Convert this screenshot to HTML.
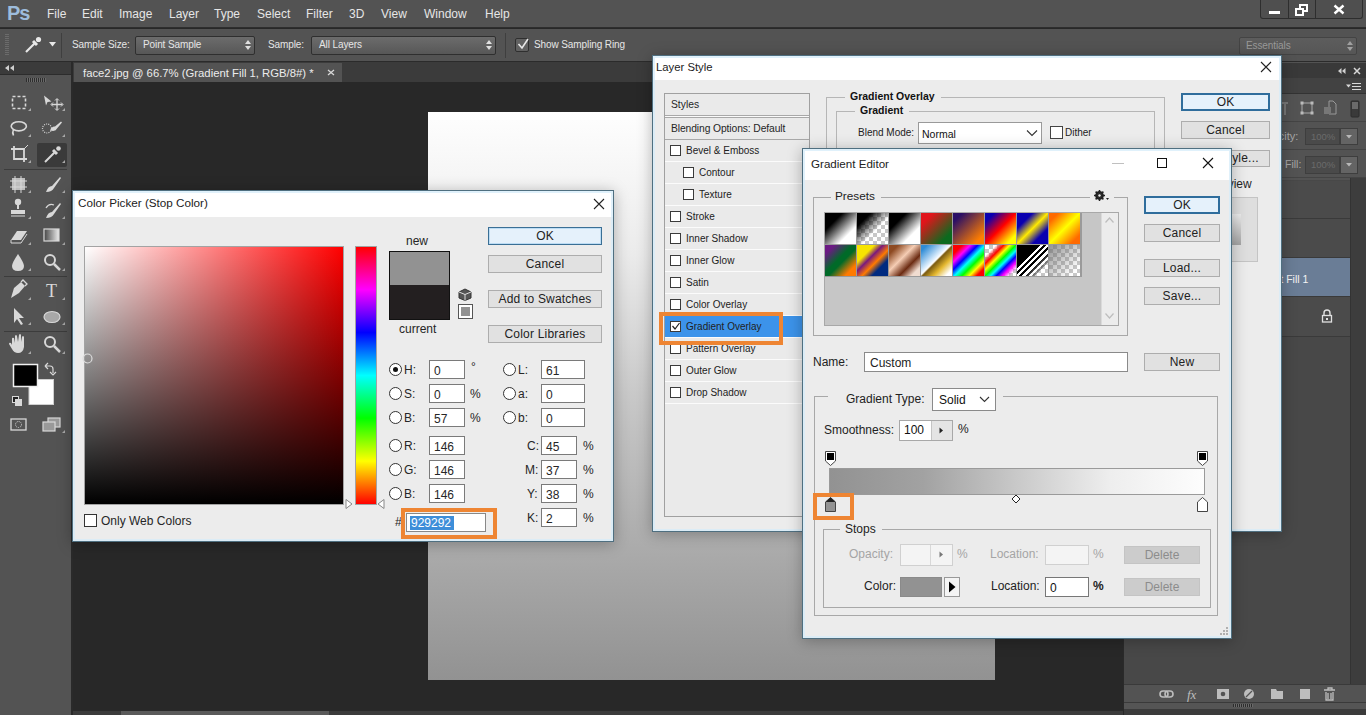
<!DOCTYPE html>
<html><head><meta charset="utf-8">
<style>
*{margin:0;padding:0;box-sizing:border-box}
html,body{width:1366px;height:715px;overflow:hidden;background:#282828;font-family:"Liberation Sans",sans-serif;}
.a{position:absolute}
.t{position:absolute;white-space:nowrap;line-height:1}
#menubar{left:0;top:0;width:1366px;height:28px;background:#535353;border-bottom:1px solid #2e2e2e}
#menubar .t{color:#e6e6e6;font-size:12px;top:8px}
#opts{left:0;top:29px;width:1366px;height:33px;background:#535353;border-bottom:1px solid #2b2b2b}
.ow{color:#e6e6e6;font-size:10px;letter-spacing:-0.1px}
.dd{position:absolute;background:linear-gradient(#6c6c6c,#575757);border:1px solid #2f2f2f;border-radius:2px}
#tools{left:0;top:62px;width:71px;height:653px;background:#535353}
#canvasbg{left:72px;top:62px;width:1051px;height:647px;background:#282828}
.dlg::after{content:"";position:absolute;left:0;top:0;right:0;bottom:0;border:2px solid rgba(214,236,250,.75)}
.dlg{position:absolute;background:#ececec;border:1px solid #4f6f80;box-shadow:0 2px 14px rgba(0,0,0,.28)}
.dlg .title{position:absolute;left:0;top:0;right:0;background:#fff}
.dt{position:absolute;white-space:nowrap;line-height:1;color:#262626;font-size:12px}
.btn{position:absolute;background:#e1e1e1;border:1px solid #adadad;color:#222;font-size:12px;text-align:center;letter-spacing:0.2px}
.btn.def{background:#e5f1fb;border:1px solid #3a6f95;box-shadow:inset 0 0 0 1px #bcdcf4}
.inp{position:absolute;background:#fff;border:1px solid #7a7a7a}
.cb{position:absolute;width:13px;height:13px;background:#fff;border:1px solid #333}
.rb{position:absolute;width:13px;height:13px;background:#fff;border:1px solid #333;border-radius:50%}
.grp{position:absolute;border:1px solid #b6b6b6}
</style></head><body>
<div id="menubar" class="a">
  <div class="t" style="left:7px;top:3px;font-size:20px;font-weight:bold;color:#9dbcdc;letter-spacing:-1px">Ps</div>
  <div class="t" style="left:47px">File</div>
  <div class="t" style="left:82px">Edit</div>
  <div class="t" style="left:119px">Image</div>
  <div class="t" style="left:169px">Layer</div>
  <div class="t" style="left:214px">Type</div>
  <div class="t" style="left:257px">Select</div>
  <div class="t" style="left:306px">Filter</div>
  <div class="t" style="left:349px">3D</div>
  <div class="t" style="left:381px">View</div>
  <div class="t" style="left:424px">Window</div>
  <div class="t" style="left:485px">Help</div>
  <div class="a" style="left:1260px;top:0;width:103px;height:19px;background:#4f4f4f;border:1px solid #2e2e2e;border-top:none;border-radius:0 0 3px 3px"></div>
  <div class="a" style="left:1288px;top:0;width:1px;height:18px;background:#2e2e2e"></div>
  <div class="a" style="left:1315px;top:0;width:1px;height:18px;background:#2e2e2e"></div>
  <div class="a" style="left:1269px;top:11px;width:11px;height:3px;background:#fff"></div>
  <svg class="a" style="left:1295px;top:4px" width="14" height="12"><rect x="5" y="1" width="7" height="6" fill="none" stroke="#fff" stroke-width="2"/><rect x="1" y="5" width="7" height="6" fill="#4f4f4f" stroke="#fff" stroke-width="2"/></svg>
  <svg class="a" style="left:1333px;top:4px" width="12" height="11"><path d="M1.5 1.5L10.5 9.5M10.5 1.5L1.5 9.5" stroke="#fff" stroke-width="2.4"/></svg>
</div>
<div id="opts" class="a">
  <div class="a" style="left:5px;top:5px;width:4px;height:22px;background:repeating-linear-gradient(#6b6b6b 0 1px,transparent 1px 2px)"></div>
  <svg class="a" style="left:23px;top:7px" width="20" height="18"><path d="M3 16 L12 7" stroke="#e8e8e8" stroke-width="2.2"/><path d="M10 5 L14 9" stroke="#e8e8e8" stroke-width="3"/><circle cx="15.5" cy="3.5" r="2.6" fill="#e8e8e8"/></svg>
  <svg class="a" style="left:49px;top:13px" width="8" height="5"><path d="M0 0H7L3.5 4.5Z" fill="#e8e8e8"/></svg>
  <div class="a" style="left:61px;top:4px;width:1px;height:25px;background:#3f3f3f"></div>
  <div class="t ow" style="left:72px;top:11px">Sample Size:</div>
  <div class="dd" style="left:135px;top:7px;width:120px;height:19px"></div>
  <div class="t ow" style="left:143px;top:11px">Point Sample</div>
  <svg class="a" style="left:245px;top:11px" width="7" height="11"><path d="M0 4H6L3 0Z M0 6H6L3 10Z" fill="#e0e0e0"/></svg>
  <div class="t ow" style="left:268px;top:11px">Sample:</div>
  <div class="dd" style="left:311px;top:7px;width:185px;height:19px"></div>
  <div class="t ow" style="left:319px;top:11px">All Layers</div>
  <svg class="a" style="left:486px;top:11px" width="7" height="11"><path d="M0 4H6L3 0Z M0 6H6L3 10Z" fill="#e0e0e0"/></svg>
  <div class="a" style="left:505px;top:4px;width:1px;height:25px;background:#3f3f3f"></div>
  <div class="a" style="left:515px;top:9px;width:14px;height:14px;background:#616161;border:1px solid #2f2f2f;border-radius:2px"></div>
  <svg class="a" style="left:516px;top:8px" width="14" height="13"><path d="M2.5 7L6 11L12 2" stroke="#e8e8e8" stroke-width="1.6" fill="none"/></svg>
  <div class="t ow" style="left:534px;top:11px">Show Sampling Ring</div>
  <div class="dd" style="left:1239px;top:8px;width:118px;height:18px;background:linear-gradient(#5d5d5d,#565656);border-color:#444"></div>
  <div class="t ow" style="left:1246px;top:12px;color:#9a9a9a">Essentials</div>
  <svg class="a" style="left:1347px;top:12px" width="7" height="11"><path d="M0 4H6L3 0Z M0 6H6L3 10Z" fill="#a0a0a0"/></svg>
</div>
<div id="tools" class="a"></div>
<div id="canvasbg" class="a"></div>
<!-- tab strip -->
<div class="a" style="left:72px;top:62px;width:1051px;height:20px;background:#3b3b3b"></div>
<div class="a" style="left:74px;top:63px;width:268px;height:19px;background:#535353"></div>
<div class="t" style="left:83px;top:68px;font-size:11.3px;color:#ececec">face2.jpg @ 66.7% (Gradient Fill 1, RGB/8#) *</div>
<svg class="a" style="left:327px;top:69px" width="8" height="7"><path d="M1 1L7 6M7 1L1 6" stroke="#d8d8d8" stroke-width="1.3"/></svg>
<!-- toolbar -->
<div class="a" style="left:0;top:62px;width:71px;height:13px;background:#3b3b3b;border-bottom:1px solid #2c2c2c"></div>
<svg class="a" style="left:5px;top:65px" width="10" height="7"><path d="M4 0V6L0 3Z M9 0V6L5 3Z" fill="#cfcfcf"/></svg>
<div class="a" style="left:71px;top:62px;width:2px;height:653px;background:#2a2a2a"></div>
<div class="a" style="left:26px;top:78px;width:20px;height:4px;background:repeating-linear-gradient(90deg,#2d2d2d 0 1px,#6a6a6a 1px 2px)"></div>
<div class="a" style="left:4px;top:169px;width:63px;height:1px;background:#3c3c3c"></div>
<div class="a" style="left:4px;top:276px;width:63px;height:1px;background:#3c3c3c"></div>
<div class="a" style="left:4px;top:331px;width:63px;height:1px;background:#3c3c3c"></div>
<div class="a" style="left:37px;top:143px;width:30px;height:24px;background:#3a3a3a;border-radius:2px"></div>

<svg class="a" style="left:0;top:85px" width="71" height="360" fill="#d8d8d8" stroke="#d8d8d8">
 <!-- marquee r0 y~17 -->
 <rect x="12.5" y="11.5" width="13" height="12" fill="none" stroke-width="1.6" stroke-dasharray="3 2"/>
 <path d="M44 10.5 L51.5 16.5 L47.5 17 L46 20.5 Z" stroke="none"/><path d="M57 14v11M51.5 19.5h11" stroke-width="1.3" fill="none"/><path d="M55 15.5L57 13.5L59 15.5M55 23.5L57 25.5L59 23.5M53 17.5L51 19.5L53 21.5M61 17.5L63 19.5L61 21.5" fill="none" stroke-width="1"/>
 <!-- lasso r1 y~43 -->
 <ellipse cx="18.8" cy="41.3" rx="7.6" ry="4.6" fill="none" stroke-width="1.6"/><path d="M13.5 44.5 q-1.5 3 0 6" fill="none" stroke-width="1.6"/>
 <path d="M50 45.5 Q52 41 55 41.5 L61 36.5 L62 37.5 L57 43.5 Q56 47 50 45.5Z" stroke="none"/><circle cx="47" cy="43.5" r="4.5" fill="none" stroke-width="1.2" stroke-dasharray="1 1.2"/>
 <!-- crop r2 y~69 -->
 <path d="M14 61v13h13M11 64h13v13" fill="none" stroke-width="1.8"/><path d="M24 64 L28 60" stroke-width="1"/>
 <path d="M45 77 L55 67" stroke-width="2" /><path d="M53 65 L57 69" stroke-width="3"/><circle cx="58.5" cy="63.5" r="2.3" stroke="none"/>
 <!-- heal r3 y~99 -->
 <rect x="12" y="93" width="13" height="12" stroke="none" fill="#bdbdbd"/><path d="M10 96h17M10 102h17M15 91v17M21 91v17" stroke-width="1" fill="none"/>
 <path d="M46 107 Q48 101 52 101 L60 92 L61 93 L54 103 Q52 107 46 107Z" stroke="none"/>
 <!-- stamp r4 y~125 -->
 <circle cx="18" cy="117" r="3.2" stroke="none"/><path d="M17 119h2v5h-2z M11 125h14v4H11z" stroke="none"/><path d="M11 131h14" stroke-width="1"/>
 <path d="M46 133 Q48 127 52 127 L60 118 L61 119 L54 129 Q52 133 46 133Z" stroke="none"/><path d="M46 123 q3 -5 8 -3" fill="none" stroke-width="1.3"/>
 <!-- eraser r5 y~151 -->
 <path d="M11 155 L17 146 L27 146 L21 155 Z" stroke="none"/><path d="M11 155 v3 h10 l6 -9" fill="none" stroke-width="1"/>
 <rect x="44" y="144" width="15" height="12" fill="url(#gg)" stroke-width="1.2"/>
 <!-- blur r6 y~177 -->
 <path d="M18 169 Q12 178 12 181 Q12 186 18 186 Q24 186 24 181 Q24 178 18 169Z" stroke="none"/>
 <circle cx="50" cy="175" r="5" fill="none" stroke-width="2"/><path d="M54 179 L60 185" stroke-width="2.5"/>
 <!-- pen r7 y~205 -->
 <path d="M11 213 L14 203 L21 197 L25 201 L19 208 Z" stroke="none"/><path d="M21 197 L23 195 L27 199 L25 201" fill="none" stroke-width="1.3"/>
 <text x="46" y="212" font-family="Liberation Serif" font-size="18" stroke="none">T</text>
 <!-- path select r8 y~231 -->
 <path d="M14 223 L14 238 L17 234 L21 240 L23 239 L19 233 L24 233 Z" stroke="none"/>
 <ellipse cx="52" cy="232" rx="8" ry="5.5" fill="#a8a8a8" stroke-width="1.2"/>
 <!-- hand r9 y~260 -->
 <path d="M12 260 L12 254 Q12 252 14 253 L15 258 L15 251 Q16 249 17 251 L18 257 L19 250 Q20 248 21 250 L21 257 L22 252 Q23 250 24 252 L24 262 Q23 268 18 268 Q14 268 12 264 L9 259 Q9 257 11 258Z" stroke="none"/>
 <circle cx="50" cy="257" r="5" fill="none" stroke-width="2"/><path d="M54 261 L60 267" stroke-width="2.5"/>
 <!-- fg/bg -->
 <rect x="29" y="294.5" width="24.5" height="25" fill="#fff" stroke="#d0d0d0" stroke-width="1"/>
 <rect x="13.5" y="279.5" width="24" height="22" fill="#000" stroke="#f0f0f0" stroke-width="1.5"/>
 <path d="M45 281 L48 278 M45 281 L48 284 M45 281 h5 q3 0 3 3 v4 M50 287 L53 290 L56 287" fill="none" stroke-width="1.2"/>
 <rect x="12.5" y="311.5" width="6" height="6" fill="#222" stroke-width="1"/><rect x="15.5" y="314.5" width="6" height="6" fill="#d8d8d8" stroke-width="1"/>
 <!-- quick mask -->
 <rect x="11" y="334" width="15" height="11" fill="none" stroke-width="1.3"/><circle cx="18.5" cy="339.5" r="3" fill="none" stroke-width="1" stroke-dasharray="1 1"/>
 <rect x="48" y="333" width="12" height="9" fill="#999" stroke-width="1.2"/><rect x="43" y="337" width="12" height="9" fill="#999" stroke-width="1.2"/>
 <path d="M31 23V26H28Z" stroke="none" fill="#a8a8a8"/><path d="M65 23V26H62Z" stroke="none" fill="#a8a8a8"/><path d="M31 49V52H28Z" stroke="none" fill="#a8a8a8"/><path d="M65 49V52H62Z" stroke="none" fill="#a8a8a8"/><path d="M31 75V78H28Z" stroke="none" fill="#a8a8a8"/><path d="M65 75V78H62Z" stroke="none" fill="#a8a8a8"/><path d="M31 105V108H28Z" stroke="none" fill="#a8a8a8"/><path d="M65 105V108H62Z" stroke="none" fill="#a8a8a8"/><path d="M31 131V134H28Z" stroke="none" fill="#a8a8a8"/><path d="M65 131V134H62Z" stroke="none" fill="#a8a8a8"/><path d="M31 157V160H28Z" stroke="none" fill="#a8a8a8"/><path d="M65 157V160H62Z" stroke="none" fill="#a8a8a8"/><path d="M31 183V186H28Z" stroke="none" fill="#a8a8a8"/><path d="M65 183V186H62Z" stroke="none" fill="#a8a8a8"/><path d="M31 212V215H28Z" stroke="none" fill="#a8a8a8"/><path d="M65 212V215H62Z" stroke="none" fill="#a8a8a8"/><path d="M31 237V240H28Z" stroke="none" fill="#a8a8a8"/><path d="M65 237V240H62Z" stroke="none" fill="#a8a8a8"/><path d="M31 266V269H28Z" stroke="none" fill="#a8a8a8"/><path d="M65 266V269H62Z" stroke="none" fill="#a8a8a8"/><path d="M65 345V348H62Z" stroke="none" fill="#a8a8a8"/>
 <defs><linearGradient id="gg"><stop offset="0" stop-color="#444"/><stop offset="1" stop-color="#eee"/></linearGradient></defs>
</svg>

<!-- document canvas -->
<div class="a" style="left:428px;top:112px;width:567px;height:568px;background:linear-gradient(#fefefe,#ebebeb 25%,#c8c8c8 50%,#929292)"></div>
<!-- right panel -->
<div class="a" style="left:1123px;top:62px;width:243px;height:647px;background:#535353;border-left:1px solid #2a2a2a"></div>
<div class="a" style="left:1124px;top:63px;width:242px;height:15px;background:#393939"></div>
<svg class="a" style="left:1338px;top:68px" width="8" height="7"><path d="M3.5 0V6L0 3Z M7.5 0V6L4 3Z" fill="#d0d0d0"/></svg>
<svg class="a" style="left:1353px;top:67px" width="8" height="8"><path d="M1 1L7 7M7 1L1 7" stroke="#d8d8d8" stroke-width="1.5"/></svg>
<div class="a" style="left:1124px;top:78px;width:242px;height:16px;background:#424242;border-bottom:1px solid #333"></div>
<svg class="a" style="left:1346px;top:82px" width="16" height="10"><path d="M0 2.5H5L2.5 5.5Z" fill="#d8d8d8"/><path d="M6 1.5H15M6 4.5H15M6 7.5H15" stroke="#d8d8d8" stroke-width="1.2"/></svg>
<div class="a" style="left:1124px;top:121px;width:242px;height:1px;background:#444"></div>
<svg class="a" style="left:1282px;top:98px" width="84" height="22">
  <path d="M0 5H6M3 5V17" stroke="#777" stroke-width="2"/>
  <rect x="20" y="5" width="10" height="10" fill="none" stroke="#aaa" stroke-width="1"/><g fill="#bbb"><rect x="18.5" y="3.5" width="3" height="3"/><rect x="28.5" y="3.5" width="3" height="3"/><rect x="18.5" y="13.5" width="3" height="3"/><rect x="28.5" y="13.5" width="3" height="3"/></g>
  <path d="M47 3H51L54 6V16H47Z" fill="none" stroke="#999" stroke-width="1"/><rect x="42" y="9" width="7" height="7" fill="#777"/>
  <rect x="69" y="3" width="8" height="16" rx="1" fill="#3a3a3a" stroke="#2c2c2c"/><rect x="70" y="4" width="6" height="7" fill="#6a6a6a"/>
</svg>
<div class="a" style="left:1124px;top:149px;width:242px;height:1px;background:#444"></div>
<div class="t" style="left:1258px;top:131px;font-size:11px;color:#a8a8a8">Opacity:</div>
<div class="a" style="left:1305px;top:128px;width:35px;height:17px;background:#4a4a4a;border:1px solid #3e3e3e"></div>
<div class="t" style="left:1311px;top:132px;font-size:9.5px;color:#6a6a6a">100%</div>
<div class="a" style="left:1340px;top:128px;width:18px;height:17px;background:#646464;border:1px solid #3e3e3e"></div>
<svg class="a" style="left:1346px;top:135px" width="7" height="4"><path d="M0 0H6L3 3.5Z" fill="#b8b8b8"/></svg>
<div class="a" style="left:1124px;top:177px;width:242px;height:1px;background:#444"></div>
<div class="t" style="left:1285px;top:159px;font-size:10.5px;color:#a8a8a8">Fill:</div>
<div class="a" style="left:1305px;top:156px;width:35px;height:18px;background:#4a4a4a;border:1px solid #3e3e3e"></div>
<div class="t" style="left:1311px;top:160px;font-size:9.5px;color:#6a6a6a">100%</div>
<div class="a" style="left:1340px;top:156px;width:18px;height:18px;background:#646464;border:1px solid #3e3e3e"></div>
<svg class="a" style="left:1346px;top:163px" width="7" height="4"><path d="M0 0H6L3 3.5Z" fill="#b8b8b8"/></svg>
<div class="a" style="left:1124px;top:180px;width:226px;height:504px;background:#484848"></div>
<div class="a" style="left:1350px;top:178px;width:16px;height:506px;background:#3d3d3d;border-left:1px solid #333"></div>
<div class="a" style="left:1124px;top:181px;width:226px;height:38px;background:#4b4b4b;border-bottom:1px solid #3a3a3a"></div>
<div class="a" style="left:1124px;top:219px;width:226px;height:39px;background:#4b4b4b;border-bottom:1px solid #3a3a3a"></div>
<div class="a" style="left:1124px;top:258px;width:226px;height:39px;background:#6a7d96;border-bottom:1px solid #3a3a3a"></div>
<div class="t" style="left:1243px;top:274px;font-size:10.5px;color:#f4f4f4">Gradient Fill 1</div>
<div class="a" style="left:1124px;top:297px;width:226px;height:40px;background:#4b4b4b;border-bottom:1px solid #3a3a3a"></div>
<svg class="a" style="left:1321px;top:309px" width="12" height="14"><path d="M3 6V4Q3 1 6 1Q9 1 9 4V6" fill="none" stroke="#e0e0e0" stroke-width="1.4"/><rect x="1.5" y="6.5" width="9" height="6.5" fill="none" stroke="#e0e0e0" stroke-width="1.3"/><rect x="5" y="9" width="2" height="2" fill="#e0e0e0"/></svg>
<!-- bottom bar -->
<div class="a" style="left:1124px;top:684px;width:242px;height:18px;background:#535353;border-top:1px solid #3a3a3a"></div>
<svg class="a" style="left:1155px;top:686px" width="211" height="16" fill="#bdbdbd" stroke="#bdbdbd">
  <rect x="5" y="5" width="8" height="6" rx="3" fill="none" stroke-width="1.6"/><rect x="10" y="5" width="8" height="6" rx="3" fill="none" stroke-width="1.6"/>
  <text x="32" y="12.5" font-family="Liberation Serif" font-style="italic" font-size="13" stroke="none">fx</text>
  <rect x="62" y="3" width="12" height="10" stroke="none"/><circle cx="68" cy="8" r="2.3" fill="#535353" stroke="none"/>
  <circle cx="94" cy="8" r="5" stroke="none"/><path d="M91 11L97 5" stroke="#535353" stroke-width="1.3"/>
  <path d="M116 3H121L122 5H128V13H116Z" stroke="none"/>
  <rect x="145" y="3" width="10" height="10" stroke="none"/><path d="M143 9V14H148" fill="none" stroke="#535353" stroke-width="2"/>
  <path d="M169 4H180M171 6V14H178V6M173 7V13M176 7V13M173 4V2H177V4" fill="none" stroke-width="1.3"/>
</svg>
<div class="a" style="left:1124px;top:702px;width:242px;height:7px;background:#555;border-top:1px solid #3a3a3a"></div>
<div class="a" style="left:1233px;top:704px;width:20px;height:3px;background:repeating-linear-gradient(90deg,#2d2d2d 0 1px,#6a6a6a 1px 2px)"></div>
<!-- status -->
<div class="a" style="left:73px;top:710px;width:1050px;height:5px;background:#3b3b3b;border-top:1px solid #2a2a2a"></div>
<div class="a" style="left:121px;top:711px;width:208px;height:4px;background:#5a5a5a"></div>
<div class="a" style="left:1124px;top:709px;width:242px;height:6px;background:#3b3b3b"></div>

<!-- Layer Style dialog -->
<div class="dlg" style="left:652px;top:55px;width:630px;height:477px">
  <div class="title" style="height:24px"></div>
  <div class="a" style="left:-1px;top:-1px">
  <div class="dt" style="left:4px;top:7px;font-size:11.3px;color:#222">Layer Style</div>
  <svg class="a" style="left:608px;top:6px" width="12" height="12"><path d="M1 1L11 11M11 1L1 11" stroke="#222" stroke-width="1.1"/></svg>
  <div class="a" style="left:12px;top:38px;width:146px;height:424px;border:1px solid #a0a0a0;background:#eaeaea"></div>
  <div class="a" style="left:13px;top:60px;width:144px;height:3px;border-top:1px solid #a8a8a8;border-bottom:1px solid #a8a8a8;background:#fafafa"></div>
  <div class="a" style="left:13px;top:84px;width:144px;height:1px;background:#a8a8a8"></div>
  <div class="dt" style="left:19px;top:45px;font-size:10.3px">Styles</div>
  <div class="dt" style="left:19px;top:69px;font-size:10.3px;letter-spacing:-0.1px">Blending Options: Default</div>
  <div class="a" style="left:13px;top:106px;width:144px;height:1px;background:#fbfbfb"></div>
  <div class="cb" style="left:18px;top:90px;width:11px;height:11px;border-color:#3a3a3a"></div>
  <div class="dt" style="left:34px;top:91px;font-size:10px;color:#222">Bevel &amp; Emboss</div>
  <div class="a" style="left:13px;top:128px;width:144px;height:1px;background:#fbfbfb"></div>
  <div class="cb" style="left:31px;top:112px;width:11px;height:11px;border-color:#3a3a3a"></div>
  <div class="dt" style="left:47px;top:113px;font-size:10px;color:#222">Contour</div>
  <div class="a" style="left:13px;top:150px;width:144px;height:1px;background:#fbfbfb"></div>
  <div class="cb" style="left:31px;top:134px;width:11px;height:11px;border-color:#3a3a3a"></div>
  <div class="dt" style="left:47px;top:135px;font-size:10px;color:#222">Texture</div>
  <div class="a" style="left:13px;top:172px;width:144px;height:1px;background:#fbfbfb"></div>
  <div class="cb" style="left:18px;top:156px;width:11px;height:11px;border-color:#3a3a3a"></div>
  <div class="dt" style="left:34px;top:157px;font-size:10px;color:#222">Stroke</div>
  <div class="a" style="left:13px;top:194px;width:144px;height:1px;background:#fbfbfb"></div>
  <div class="cb" style="left:18px;top:178px;width:11px;height:11px;border-color:#3a3a3a"></div>
  <div class="dt" style="left:34px;top:179px;font-size:10px;color:#222">Inner Shadow</div>
  <div class="a" style="left:13px;top:216px;width:144px;height:1px;background:#fbfbfb"></div>
  <div class="cb" style="left:18px;top:200px;width:11px;height:11px;border-color:#3a3a3a"></div>
  <div class="dt" style="left:34px;top:201px;font-size:10px;color:#222">Inner Glow</div>
  <div class="a" style="left:13px;top:238px;width:144px;height:1px;background:#fbfbfb"></div>
  <div class="cb" style="left:18px;top:222px;width:11px;height:11px;border-color:#3a3a3a"></div>
  <div class="dt" style="left:34px;top:223px;font-size:10px;color:#222">Satin</div>
  <div class="a" style="left:13px;top:260px;width:144px;height:1px;background:#fbfbfb"></div>
  <div class="cb" style="left:18px;top:244px;width:11px;height:11px;border-color:#3a3a3a"></div>
  <div class="dt" style="left:34px;top:245px;font-size:10px;color:#222">Color Overlay</div>
  <div class="a" style="left:13px;top:261px;width:150px;height:21px;background:#3c93ea"></div>
  <div class="a" style="left:13px;top:282px;width:144px;height:1px;background:#fbfbfb"></div>
  <div class="cb" style="left:18px;top:266px;width:11px;height:11px;border-color:#3a3a3a"></div>
  <svg class="a" style="left:19px;top:266px" width="10" height="10"><path d="M1.5 5L4 8L8.5 2" stroke="#222" stroke-width="1.2" fill="none"/></svg>
  <div class="dt" style="left:34px;top:267px;font-size:10px;color:#222">Gradient Overlay</div>
  <div class="a" style="left:13px;top:304px;width:144px;height:1px;background:#fbfbfb"></div>
  <div class="cb" style="left:18px;top:288px;width:11px;height:11px;border-color:#3a3a3a"></div>
  <div class="dt" style="left:34px;top:289px;font-size:10px;color:#222">Pattern Overlay</div>
  <div class="a" style="left:13px;top:326px;width:144px;height:1px;background:#fbfbfb"></div>
  <div class="cb" style="left:18px;top:310px;width:11px;height:11px;border-color:#3a3a3a"></div>
  <div class="dt" style="left:34px;top:311px;font-size:10px;color:#222">Outer Glow</div>
  <div class="a" style="left:13px;top:348px;width:144px;height:1px;background:#fbfbfb"></div>
  <div class="cb" style="left:18px;top:332px;width:11px;height:11px;border-color:#3a3a3a"></div>
  <div class="dt" style="left:34px;top:333px;font-size:10px;color:#222">Drop Shadow</div>
  <div class="a" style="left:7px;top:257px;width:124px;height:33px;border:4px solid #ee8533"></div>
  <div class="grp" style="left:174px;top:42px;width:339px;height:60px"></div>
  <div class="grp" style="left:184px;top:56px;width:319px;height:50px"></div>
  <div class="a" style="left:193px;top:35px;width:96px;height:14px;background:#ececec"></div>
  <div class="dt" style="left:198px;top:36px;font-size:10.5px;font-weight:bold;color:#111">Gradient Overlay</div>
  <div class="a" style="left:203px;top:49px;width:54px;height:14px;background:#ececec"></div>
  <div class="dt" style="left:208px;top:50px;font-size:10.5px;font-weight:bold;color:#111">Gradient</div>
  <div class="dt" style="left:206px;top:73px;font-size:10px;color:#222">Blend Mode:</div>
  <div class="inp" style="left:266px;top:67px;width:124px;height:22px;border-color:#9a9a9a"></div>
  <div class="dt" style="left:270px;top:74px;font-size:10.5px;color:#111">Normal</div>
  <svg class="a" style="left:374px;top:74px" width="12" height="8"><path d="M1 1.5L6 6.5L11 1.5" stroke="#333" stroke-width="1.1" fill="none"/></svg>
  <div class="cb" style="left:398px;top:71px;width:13px;height:13px;border-color:#444"></div>
  <div class="dt" style="left:413px;top:73px;font-size:10px;color:#222">Dither</div>
  <div class="btn def" style="left:529px;top:38px;width:89px;height:18px;line-height:14px;border:2px solid #2f6d9c;box-shadow:none">OK</div>
  <div class="btn" style="left:529px;top:66px;width:89px;height:18px;line-height:16px">Cancel</div>
  <div class="btn" style="left:529px;top:95px;width:89px;height:17px;line-height:15px">New Style...</div>
  <div class="cb" style="left:529px;top:123px;width:12px;height:12px"></div>
  <div class="dt" style="left:557px;top:123px">Preview</div>
  <div class="a" style="left:552px;top:142px;width:54px;height:65px;border:1px solid #c4c4c4;background:#dedede"></div>
  <div class="a" style="left:561px;top:159px;width:28px;height:31px;background:linear-gradient(#ececec,#a4a4a4)"></div>
  </div>
</div>
<!-- Color picker -->
<div class="dlg" style="left:72px;top:190px;width:542px;height:352px">
  <div class="title" style="height:26px"></div>
  <div class="dt" style="left:5px;top:6px;font-size:11.7px;color:#222">Color Picker (Stop Color)</div>
  <svg class="a" style="left:520px;top:7px" width="12" height="12"><path d="M1 1L11 11M11 1L1 11" stroke="#222" stroke-width="1.1"/></svg>
  <div class="a" style="left:11px;top:55px;width:260px;height:259px;border:1px solid #a3a3a3;background:linear-gradient(to bottom,rgba(0,0,0,0),#000),linear-gradient(to right,#fff,#f00)"></div>
  <svg class="a" style="left:9px;top:162px" width="12" height="12"><circle cx="5.5" cy="5.5" r="4.5" fill="none" stroke="#ddd" stroke-width="1.2"/></svg>
  <div class="a" style="left:282px;top:55px;width:22px;height:259px;border:1px solid #a3a3a3;background:linear-gradient(#f00,#f0f 16.6%,#00f 33.3%,#0ff 50%,#0f0 66.6%,#ff0 83.3%,#f00)"></div>
  <svg class="a" style="left:272px;top:307px" width="40" height="12"><path d="M1 1.5L7 6L1 10.5Z M39 1.5L33 6L39 10.5Z" fill="#fff" stroke="#888" stroke-width="1"/></svg>
  <div class="dt" style="left:333px;top:44px;font-size:12px">new</div>
  <div class="a" style="left:316px;top:60px;width:61px;height:69px;border:1px solid #111;background:linear-gradient(#929292 0 50%,#231f20 50%)"></div>
  <div class="dt" style="left:326px;top:132px;font-size:12px">current</div>
  <svg class="a" style="left:385px;top:97px" width="14" height="13"><path d="M7 1L13 4V10L7 12.5L1 10V4Z" fill="#555" stroke="#333" stroke-width="1"/><path d="M1 4L7 6.5L13 4M7 6.5V12.5" stroke="#ddd" stroke-width="1" fill="none"/></svg>
  <div class="a" style="left:385px;top:113px;width:15px;height:15px;border:1px solid #555;background:#fff"><div class="a" style="left:2px;top:2px;width:9px;height:9px;background:#929292"></div></div>
  <div class="btn def" style="left:415px;top:36px;width:114px;height:18px;line-height:16px">OK</div>
  <div class="btn" style="left:415px;top:64px;width:114px;height:18px;line-height:16px">Cancel</div>
  <div class="btn" style="left:415px;top:99px;width:114px;height:18px;line-height:16px">Add to Swatches</div>
  <div class="btn" style="left:415px;top:134px;width:114px;height:18px;line-height:16px">Color Libraries</div>
  <div class="rb" style="left:316px;top:172px"><div class=a style='left:3px;top:3px;width:5px;height:5px;border-radius:50%;background:#111'></div></div>
  <div class="dt" style="left:331px;top:173px">H:</div>
  <div class="inp" style="left:356px;top:169px;width:36px;height:19px"></div>
  <div class="dt" style="left:361px;top:174px">0</div>
  <div class="dt" style="left:398px;top:170px">°</div>
  <div class="rb" style="left:316px;top:196px"></div>
  <div class="dt" style="left:331px;top:197px">S:</div>
  <div class="inp" style="left:356px;top:193px;width:36px;height:19px"></div>
  <div class="dt" style="left:361px;top:198px">0</div>
  <div class="dt" style="left:397px;top:197px">%</div>
  <div class="rb" style="left:316px;top:220px"></div>
  <div class="dt" style="left:331px;top:221px">B:</div>
  <div class="inp" style="left:356px;top:217px;width:36px;height:19px"></div>
  <div class="dt" style="left:361px;top:222px">57</div>
  <div class="dt" style="left:397px;top:221px">%</div>
  <div class="rb" style="left:316px;top:248px"></div>
  <div class="dt" style="left:331px;top:249px">R:</div>
  <div class="inp" style="left:356px;top:245px;width:36px;height:19px"></div>
  <div class="dt" style="left:361px;top:250px">146</div>
  <div class="rb" style="left:316px;top:272px"></div>
  <div class="dt" style="left:331px;top:273px">G:</div>
  <div class="inp" style="left:356px;top:269px;width:36px;height:19px"></div>
  <div class="dt" style="left:361px;top:274px">146</div>
  <div class="rb" style="left:316px;top:296px"></div>
  <div class="dt" style="left:331px;top:297px">B:</div>
  <div class="inp" style="left:356px;top:293px;width:36px;height:19px"></div>
  <div class="dt" style="left:361px;top:298px">146</div>
  <div class="rb" style="left:430px;top:172px"></div>
  <div class="dt" style="left:445px;top:173px">L:</div>
  <div class="inp" style="left:468px;top:169px;width:44px;height:19px"></div>
  <div class="dt" style="left:473px;top:174px">61</div>
  <div class="rb" style="left:430px;top:196px"></div>
  <div class="dt" style="left:445px;top:197px">a:</div>
  <div class="inp" style="left:468px;top:193px;width:44px;height:19px"></div>
  <div class="dt" style="left:473px;top:198px">0</div>
  <div class="rb" style="left:430px;top:220px"></div>
  <div class="dt" style="left:445px;top:221px">b:</div>
  <div class="inp" style="left:468px;top:217px;width:44px;height:19px"></div>
  <div class="dt" style="left:473px;top:222px">0</div>
  <div class="dt" style="left:454px;top:249px">C:</div>
  <div class="inp" style="left:468px;top:245px;width:36px;height:19px"></div>
  <div class="dt" style="left:473px;top:250px">45</div>
  <div class="dt" style="left:510px;top:249px">%</div>
  <div class="dt" style="left:452px;top:273px">M:</div>
  <div class="inp" style="left:468px;top:269px;width:36px;height:19px"></div>
  <div class="dt" style="left:473px;top:274px">37</div>
  <div class="dt" style="left:510px;top:273px">%</div>
  <div class="dt" style="left:454px;top:297px">Y:</div>
  <div class="inp" style="left:468px;top:293px;width:36px;height:19px"></div>
  <div class="dt" style="left:473px;top:298px">38</div>
  <div class="dt" style="left:510px;top:297px">%</div>
  <div class="dt" style="left:454px;top:321px">K:</div>
  <div class="inp" style="left:468px;top:317px;width:36px;height:19px"></div>
  <div class="dt" style="left:473px;top:322px">2</div>
  <div class="dt" style="left:510px;top:321px">%</div>
  <div class="dt" style="left:322px;top:325px">#</div>
  <div class="a" style="left:328px;top:317px;width:96px;height:31px;border:4px solid #ee8533"></div>
  <div class="inp" style="left:333px;top:322px;width:80px;height:19px;border-color:#888"></div>
  <div class="a" style="left:337px;top:325px;width:44px;height:14px;background:#3e8ed9"></div>
  <div class="dt" style="left:338px;top:326px;color:#fff">929292</div>
  <div class="cb" style="left:11px;top:323px"></div>
  <div class="dt" style="left:28px;top:324px">Only Web Colors</div>
</div>
<!-- Gradient editor -->
<div class="dlg" style="left:802px;top:148px;width:430px;height:491px">
  <div class="title" style="height:31px"></div>
  <div class="a" style="left:-1px;top:-1px">
  <div class="dt" style="left:9.0px;top:10.0px;font-size:11.6px;color:#222">Gradient Editor</div>
  <div class="a" style="left:310.0px;top:15.0px;width:12px;height:1px;background:#c0c0c0"></div>
  <div class="a" style="left:355.0px;top:10.0px;width:10px;height:10px;border:1px solid #111"></div>
  <svg class="a" style="left:400.0px;top:9.0px" width="12" height="12"><path d="M1 1L11 11M11 1L1 11" stroke="#111" stroke-width="1.1"/></svg>
  <div class="grp" style="left:11.0px;top:49.0px;width:315px;height:139px;border-color:#a8a8a8"></div>
  <div class="a" style="left:29.0px;top:42.0px;width:50px;height:14px;background:#ececec"></div>
  <div class="dt" style="left:33.0px;top:43.0px;font-size:11.8px;color:#222">Presets</div>
  <div class="a" style="left:288.0px;top:41.0px;width:24px;height:14px;background:#ececec"></div>
  <svg class="a" style="left:292.0px;top:42.0px" width="16" height="12"><circle cx="5.5" cy="5.5" r="3.3" fill="none" stroke="#222" stroke-width="2.2"/><path d="M5.5 0v11M0 5.5h11M1.6 1.6l7.8 7.8M9.4 1.6l-7.8 7.8" stroke="#222" stroke-width="1.5"/><circle cx="5.5" cy="5.5" r="1.2" fill="#f0f0f0"/><path d="M12 8h3l-1.5 2z" fill="#222"/></svg>
  <div class="a" style="left:21.5px;top:63.5px;width:295px;height:114px;border:1px solid #a8a8a8;background:#c6c6c6"></div>
  <div class="a" style="left:299.0px;top:64.5px;width:17px;height:112px;background:#ececec;border-left:1px solid #dadada"></div>
  <svg class="a" style="left:302.0px;top:68.0px" width="11" height="8"><path d="M1.5 6.5L5.5 2L9.5 6.5" stroke="#bdbdbd" stroke-width="1.2" fill="none"/></svg>
  <svg class="a" style="left:302.0px;top:164.0px" width="11" height="8"><path d="M1.5 1.5L5.5 6L9.5 1.5" stroke="#bdbdbd" stroke-width="1.2" fill="none"/></svg>
  <div class="a" style="left:22.5px;top:64.5px;width:257px;height:64px;background:#9a9a9a"></div>
  <div class="a" style="left:23.0px;top:65.0px;width:31px;height:31px;background:linear-gradient(to bottom right,#000 28%,#fff 72%)"></div>
  <div class="a" style="left:55.0px;top:65.0px;width:31px;height:31px;background-color:#fff;background-image:linear-gradient(to bottom right,#000 22%,rgba(0,0,0,0) 58%),linear-gradient(45deg,#c8c8c8 25%,transparent 25%,transparent 75%,#c8c8c8 75%),linear-gradient(45deg,#c8c8c8 25%,transparent 25%,transparent 75%,#c8c8c8 75%);background-size:100% 100%,8px 8px,8px 8px;background-position:0 0,0 0,4px 4px"></div>
  <div class="a" style="left:87.0px;top:65.0px;width:31px;height:31px;background:linear-gradient(to bottom right,#000 28%,#fff 72%)"></div>
  <div class="a" style="left:119.0px;top:65.0px;width:31px;height:31px;background:linear-gradient(to bottom right,#e0151b 20%,#0c6a1e 80%)"></div>
  <div class="a" style="left:151.0px;top:65.0px;width:31px;height:31px;background:linear-gradient(to bottom right,#2a0f66 15%,#ff7e00 85%)"></div>
  <div class="a" style="left:183.0px;top:65.0px;width:31px;height:31px;background:linear-gradient(to bottom right,#0a00b0 15%,#ff0000 50%,#ffff00 85%)"></div>
  <div class="a" style="left:215.0px;top:65.0px;width:31px;height:31px;background:linear-gradient(to bottom right,#0a00b0 25%,#ffea00 50%,#0a00b0 75%)"></div>
  <div class="a" style="left:247.0px;top:65.0px;width:31px;height:31px;background:linear-gradient(to bottom right,#ff6a00 15%,#ffff00 50%,#ff6a00 85%)"></div>
  <div class="a" style="left:23.0px;top:96.5px;width:31px;height:31px;background:linear-gradient(to bottom right,#6c1a84 15%,#006a28 45%,#006a28 55%,#ff7a00 82%)"></div>
  <div class="a" style="left:55.0px;top:96.5px;width:31px;height:31px;background:linear-gradient(to bottom right,#f7e400 28%,#7a1a7c 42%,#ff7a00 58%,#002a80 74%)"></div>
  <div class="a" style="left:87.0px;top:96.5px;width:31px;height:31px;background:linear-gradient(to bottom right,#8e4a22 15%,#f5cdb4 42%,#6b2b12 66%,#f0dcd0 86%)"></div>
  <div class="a" style="left:119.0px;top:96.5px;width:31px;height:31px;background:linear-gradient(to bottom right,#2f8cd6 10%,#e8f4ff 45%,#ffffff 48%,#7a5a10 52%,#e5b830 70%,#ffffff 90%)"></div>
  <div class="a" style="left:151.0px;top:96.5px;width:31px;height:31px;background:linear-gradient(to bottom right,#ff0000 15%,#ff00ff 28%,#0000ff 40%,#00ffff 52%,#00ff00 64%,#ffff00 76%,#ff0000 88%)"></div>
  <div class="a" style="left:183.0px;top:96.5px;width:31px;height:31px;background-color:#fff;background-image:linear-gradient(to bottom right,rgba(255,0,0,0) 18%,#ff0000 30%,#ffff00 40%,#00ff00 50%,#00ffff 59%,#0000ff 68%,#ff00ff 78%,rgba(255,0,255,0) 90%),linear-gradient(45deg,#c8c8c8 25%,transparent 25%,transparent 75%,#c8c8c8 75%),linear-gradient(45deg,#c8c8c8 25%,transparent 25%,transparent 75%,#c8c8c8 75%);background-size:100% 100%,8px 8px,8px 8px;background-position:0 0,0 0,4px 4px"></div>
  <div class="a" style="left:215.0px;top:96.5px;width:31px;height:31px;background-color:#fff;background-image:linear-gradient(45deg,#c4c4c4 25%,transparent 25%,transparent 75%,#c8c8c8 75%),linear-gradient(45deg,#c8c8c8 25%,transparent 25%,transparent 75%,#c8c8c8 75%);background-size:8px 8px;background-position:0 0,4px 4px"></div>
  <div class="a" style="left:215.0px;top:96.5px;width:31px;height:31px;background:linear-gradient(to bottom right,#000 0 38%,rgba(0,0,0,0) 38%),repeating-linear-gradient(135deg,#000 0 2.2px,#fff 2.2px 4.6px);-webkit-mask-image:linear-gradient(to bottom right,#000 60%,rgba(0,0,0,0) 85%)"></div>
  <div class="a" style="left:247.0px;top:96.5px;width:31px;height:31px;background-color:#fff;background-image:linear-gradient(to bottom right,rgba(110,110,110,0.75) 0%,rgba(110,110,110,0) 85%),linear-gradient(45deg,#c8c8c8 25%,transparent 25%,transparent 75%,#c8c8c8 75%),linear-gradient(45deg,#c8c8c8 25%,transparent 25%,transparent 75%,#c8c8c8 75%);background-size:100% 100%,8px 8px,8px 8px;background-position:0 0,0 0,4px 4px"></div>
  <div class="btn def" style="left:342.0px;top:48.0px;width:76px;height:18px;line-height:14px;border:2px solid #2f6d9c;box-shadow:none">OK</div>
  <div class="btn" style="left:342.0px;top:76.0px;width:76px;height:18px;line-height:16px">Cancel</div>
  <div class="btn" style="left:342.0px;top:111.0px;width:76px;height:18px;line-height:16px">Load...</div>
  <div class="btn" style="left:342.0px;top:139.0px;width:76px;height:18px;line-height:16px">Save...</div>
  <div class="dt" style="left:11.0px;top:208.0px;font-size:12px;color:#222">Name:</div>
  <div class="inp" style="left:62.0px;top:204.0px;width:264px;height:20px;border-color:#8a8a8a"></div>
  <div class="dt" style="left:68.0px;top:209.0px;font-size:12px;color:#222">Custom</div>
  <div class="btn" style="left:342.0px;top:205.0px;width:76px;height:18px;line-height:16px">New</div>
  <div class="grp" style="left:12.0px;top:248.0px;width:404px;height:220px;border-color:#a8a8a8"></div>
  <div class="a" style="left:26.0px;top:240.0px;width:380px;height:22px;background:#ececec"></div>
  <div class="a" style="left:12.0px;top:248.0px;width:14px;height:1px;background:#a8a8a8"></div>
  <div class="a" style="left:201.0px;top:248.0px;width:215px;height:1px;background:#a8a8a8"></div>
  <div class="dt" style="left:44.0px;top:245.0px;font-size:12px;color:#222">Gradient Type:</div>
  <div class="inp" style="left:130.0px;top:240.0px;width:64px;height:23px;border-color:#8a8a8a"></div>
  <div class="dt" style="left:137.0px;top:246.0px;font-size:12px;color:#111">Solid</div>
  <svg class="a" style="left:177.0px;top:248.0px" width="11" height="7"><path d="M1 1L5.5 5.5L10 1" stroke="#333" stroke-width="1.1" fill="none"/></svg>
  <div class="dt" style="left:22.0px;top:276.0px;font-size:12px;color:#222">Smoothness:</div>
  <div class="inp" style="left:97.0px;top:272.0px;width:54px;height:21px;border-color:#a8a8a8"></div>
  <div class="a" style="left:129.0px;top:273.0px;width:21px;height:19px;background:#e4e4e4;border-left:1px solid #c4c4c4"></div>
  <svg class="a" style="left:137.0px;top:279.0px" width="5" height="7"><path d="M0.5 0.5L4 3.5L0.5 6.5Z" fill="#222"/></svg>
  <div class="dt" style="left:102.0px;top:276.0px;font-size:12px;color:#111">100</div>
  <div class="dt" style="left:156.0px;top:275.0px;font-size:12px;color:#222">%</div>
  <svg class="a" style="left:22.0px;top:302.0px" width="13" height="17"><path d="M1.5 1.5H11.5V11L6.5 15.5L1.5 11Z" fill="#fff" stroke="#444" stroke-width="1"/><rect x="3" y="3" width="7" height="7" fill="#000"/></svg>
  <svg class="a" style="left:394.0px;top:302.0px" width="13" height="17"><path d="M1.5 1.5H11.5V11L6.5 15.5L1.5 11Z" fill="#fff" stroke="#444" stroke-width="1"/><rect x="3" y="3" width="7" height="7" fill="#000"/></svg>
  <div class="a" style="left:27.0px;top:320.0px;width:376px;height:27px;border:1px solid #9a9a9a;background:linear-gradient(to right,#929292 0%,#a2a2a2 25%,#c9c9c9 50%,#eeeeee 75%,#fdfdfd 100%)"></div>
  <svg class="a" style="left:209.0px;top:346.0px" width="10" height="10"><path d="M5 1L9 5L5 9L1 5Z" fill="#fff" stroke="#222" stroke-width="1"/></svg>
  <svg class="a" style="left:21.5px;top:348.0px" width="13" height="17"><path d="M6.5 1.5L11.5 6V15.5H1.5V6Z" fill="#929292" stroke="#444" stroke-width="1"/><path d="M6.5 1.5L11.5 6H1.5Z" fill="#222"/></svg>
  <svg class="a" style="left:393.5px;top:348.0px" width="13" height="17"><path d="M6.5 1.5L11.5 6V15.5H1.5V6Z" fill="#fff" stroke="#444" stroke-width="1"/></svg>
  <div class="a" style="left:11.0px;top:345.0px;width:41px;height:27px;border:4px solid #ee8533"></div>
  <div class="grp" style="left:21.0px;top:381.0px;width:388px;height:79px;border-color:#a8a8a8"></div>
  <div class="a" style="left:38.0px;top:374.0px;width:42px;height:14px;background:#ececec"></div>
  <div class="dt" style="left:43.0px;top:375.0px;font-size:12px;color:#222">Stops</div>
  <div class="dt" style="left:47.0px;top:400.0px;font-size:12px;color:#a5a5a5">Opacity:</div>
  <div class="inp" style="left:98.0px;top:396.0px;width:53px;height:22px;border-color:#d0d0d0;background:#f4f4f4"></div>
  <div class="a" style="left:128.0px;top:397.0px;width:1px;height:20px;background:#d8d8d8"></div>
  <svg class="a" style="left:137.0px;top:403.0px" width="5" height="7"><path d="M0.5 0.5L4 3.5L0.5 6.5Z" fill="#777"/></svg>
  <div class="dt" style="left:155.0px;top:400.0px;font-size:12px;color:#a5a5a5">%</div>
  <div class="dt" style="left:188.0px;top:400.0px;font-size:12px;color:#a5a5a5">Location:</div>
  <div class="inp" style="left:243.0px;top:397.0px;width:44px;height:20px;border-color:#d0d0d0;background:#f4f4f4"></div>
  <div class="dt" style="left:291.0px;top:400.0px;font-size:12px;color:#a5a5a5">%</div>
  <div class="a" style="left:322.0px;top:398.0px;width:76px;height:18px;background:#cccccc;border:1px solid #c4c4c4;color:#8c8c8c;font-size:12px;text-align:center;line-height:17px">Delete</div>
  <div class="dt" style="left:62.0px;top:432.0px;font-size:12px;color:#222">Color:</div>
  <div class="a" style="left:98.0px;top:429.0px;width:42px;height:20px;background:#929292;border:1px solid #8a8a8a"></div>
  <div class="a" style="left:142.0px;top:429.0px;width:16px;height:20px;background:#f4f4f4;border:1px solid #999"></div>
  <svg class="a" style="left:146.0px;top:433.0px" width="8" height="12"><path d="M1 0.5L7.5 6L1 11.5Z" fill="#000"/></svg>
  <div class="dt" style="left:189.0px;top:432.0px;font-size:12px;color:#222">Location:</div>
  <div class="inp" style="left:243.0px;top:429.0px;width:44px;height:20px;border-color:#777"></div>
  <div class="dt" style="left:248.0px;top:434.0px;font-size:12px;color:#111">0</div>
  <div class="dt" style="left:291.0px;top:432.0px;font-size:12px;color:#222;font-weight:bold">%</div>
  <div class="a" style="left:322.0px;top:430.0px;width:76px;height:18px;background:#cccccc;border:1px solid #c4c4c4;color:#8c8c8c;font-size:12px;text-align:center;line-height:17px">Delete</div>
  <svg class="a" style="left:418.0px;top:479.0px" width="10" height="10"><g fill="#b0b0b0"><rect x="6" y="0" width="2" height="2"/><rect x="3" y="3" width="2" height="2"/><rect x="6" y="3" width="2" height="2"/><rect x="0" y="6" width="2" height="2"/><rect x="3" y="6" width="2" height="2"/><rect x="6" y="6" width="2" height="2"/></g></svg>
  </div>
</div>
</body></html>
